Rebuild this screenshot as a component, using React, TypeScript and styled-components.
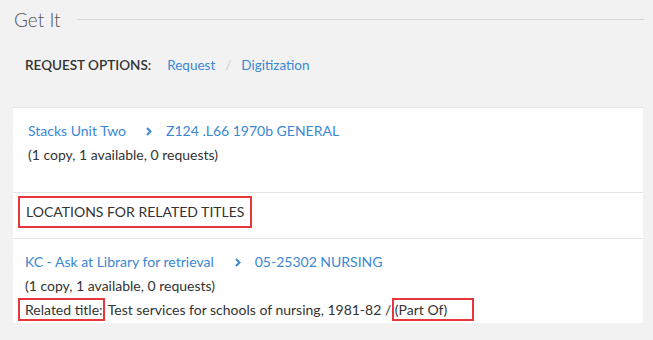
import React from "react";
import styled, { createGlobalStyle } from "styled-components";

const GlobalStyle = createGlobalStyle`
  html, body {
    margin: 0;
    padding: 0;
    background: #f2f2f2;
    font-family: Lato, "Open Sans", sans-serif;
    color: #333;
  }
`;

const Page = styled.div`
  width: 653px;
  height: 340px;
  overflow: hidden;
`;

const Header = styled.div`
  display: flex;
  align-items: center;
  padding: 7px 9px 0 14px;
  height: 24px;
  h2 {
    margin: 0;
    font-size: 19px;
    font-weight: 300;
    color: #555;
  }
  hr {
    flex: 1;
    margin: 0 0 0 16px;
    border: none;
    border-top: 1px solid #d6d6d6;
  }
`;

const Options = styled.div`
  display: flex;
  align-items: center;
  padding: 22px 0 0 25px;
  height: 24px;
  font-size: 13.5px;
  .label {
    font-weight: 600;
    color: #333;
    margin-right: 16px;
  }
  .sep {
    color: #ccc;
    margin: 0 10px;
  }
`;

const Link = styled.a`
  color: #3a87d4;
  text-decoration: none;
  cursor: pointer;
`;

const Panel = styled.div`
  margin: 30px 10px 0 13px;
  background: #fff;
  border-top: 1px solid #e6e6e6;
`;

const Holding = styled.div<{ $pad: number; $bottom: number }>`
  padding: 11px 15px ${(p) => p.$bottom}px ${(p) => p.$pad}px;
  font-size: 14px;
  line-height: 24px;
`;

const LocationLine = styled.div<{ $gap: number }>`
  display: flex;
  align-items: center;
  svg {
    margin: 0 14px 0 ${(p) => p.$gap}px;
  }
`;

const SectionTitle = styled.div`
  border-top: 1px solid #e3e3e3;
  border-bottom: 1px solid #e3e3e3;
  padding: 3px 0 10px 5px;
  span {
    display: inline-block;
    border: 2px solid #e8373a;
    padding: 5px 6px;
    font-size: 14px;
    line-height: 18px;
    text-transform: uppercase;
  }
`;

const Marked = styled.span<{ $left: number; $right: number }>`
  border: 2px solid #e8373a;
  padding: 1px ${(p) => p.$right}px 1px ${(p) => p.$left}px;
  margin-left: ${(p) => -p.$left - 2}px;
`;

const Chevron = () => (
  <svg width="6" height="9" viewBox="0 0 6 9">
    <path d="M1 1l3.5 3.5L1 8" fill="none" stroke="#3a87d4" strokeWidth="2" />
  </svg>
);

export default function App() {
  return (
    <Page>
      <GlobalStyle />
      <Header>
        <h2>Get It</h2>
        <hr />
      </Header>
      <Options>
        <span className="label">REQUEST OPTIONS:</span>
        <Link>Request</Link>
        <span className="sep">/</span>
        <Link>Digitization</Link>
      </Options>
      <Panel>
        <Holding $pad={15} $bottom={25}>
          <LocationLine $gap={20}>
            <Link>Stacks Unit Two</Link>
            <Chevron />
            <Link>Z124 .L66 1970b GENERAL</Link>
          </LocationLine>
          <div>(1 copy, 1 available, 0 requests)</div>
        </Holding>
        <SectionTitle>
          <span>Locations for related titles</span>
        </SectionTitle>
        <Holding $pad={12} $bottom={1}>
          <LocationLine $gap={21}>
            <Link>KC - Ask at Library for retrieval</Link>
            <Chevron />
            <Link>05-25302 NURSING</Link>
          </LocationLine>
          <div>(1 copy, 1 available, 0 requests)</div>
          <div>
            <Marked $left={5} $right={0}>Related title:</Marked> Test services for
            schools of nursing, 1981-82 / <Marked $left={1} $right={25}>(Part Of)</Marked>
          </div>
        </Holding>
      </Panel>
    </Page>
  );
}
